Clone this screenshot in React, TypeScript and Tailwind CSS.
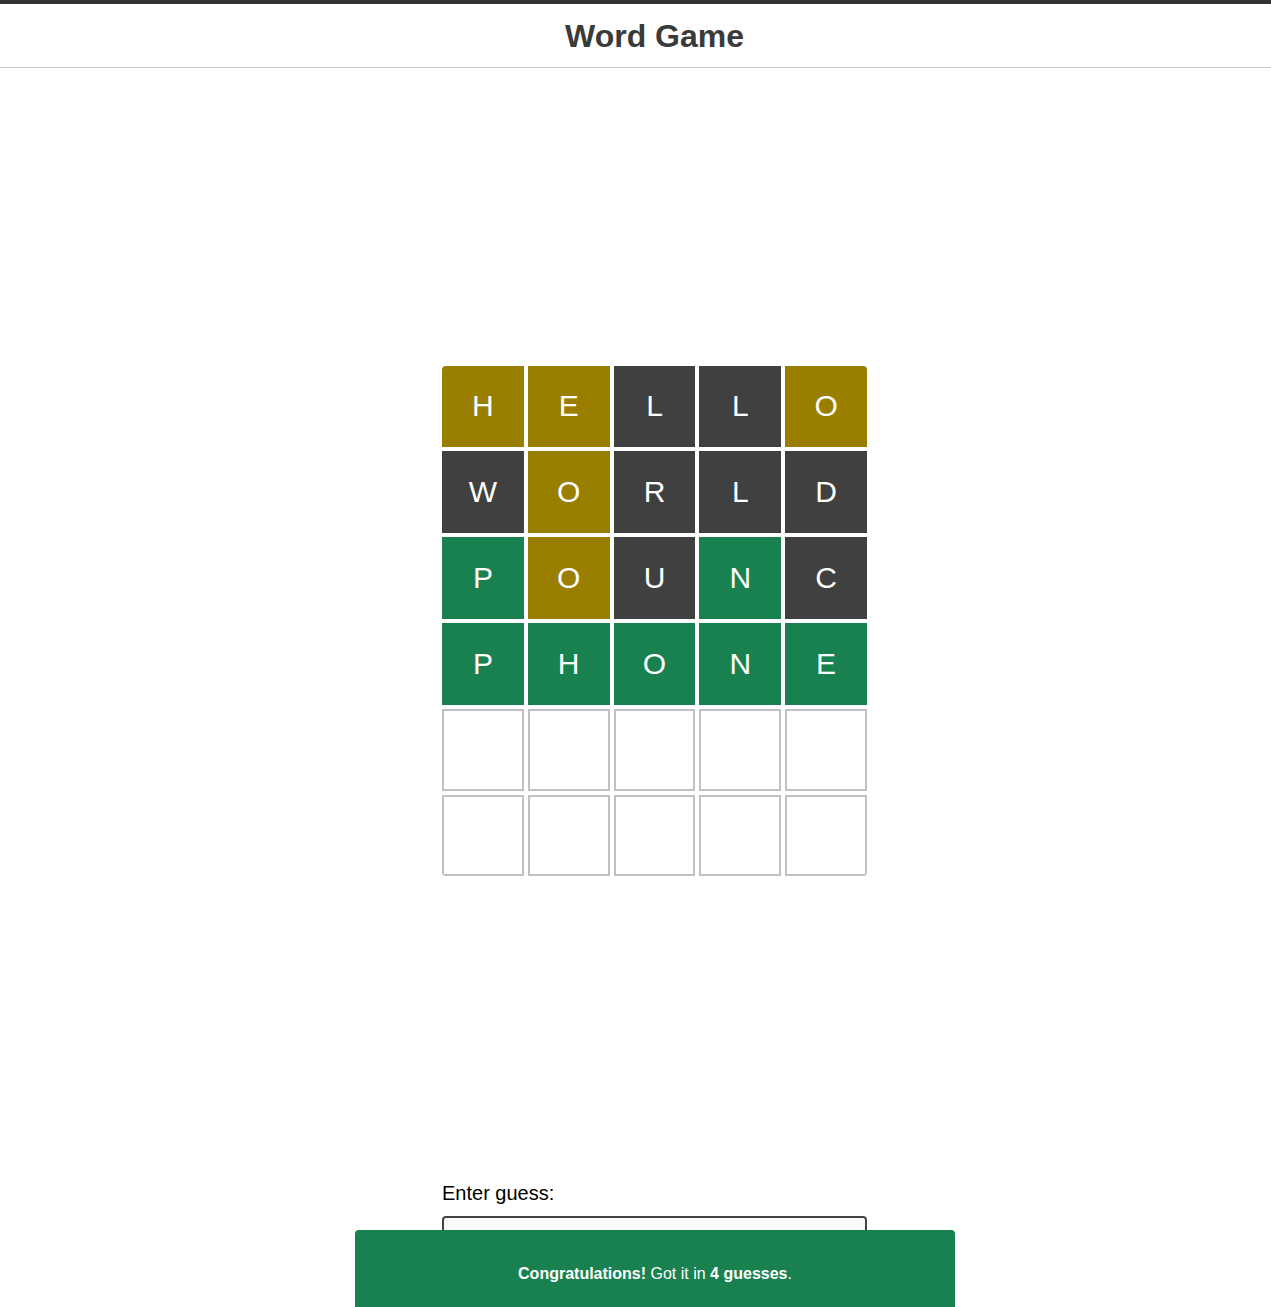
import React from "react";

type Mark = "hit" | "near" | "miss" | "empty";

const rows: { letter: string; mark: Mark }[][] = [
  [
    { letter: "H", mark: "near" },
    { letter: "E", mark: "near" },
    { letter: "L", mark: "miss" },
    { letter: "L", mark: "miss" },
    { letter: "O", mark: "near" },
  ],
  [
    { letter: "W", mark: "miss" },
    { letter: "O", mark: "near" },
    { letter: "R", mark: "miss" },
    { letter: "L", mark: "miss" },
    { letter: "D", mark: "miss" },
  ],
  [
    { letter: "P", mark: "hit" },
    { letter: "O", mark: "near" },
    { letter: "U", mark: "miss" },
    { letter: "N", mark: "hit" },
    { letter: "C", mark: "miss" },
  ],
  [
    { letter: "P", mark: "hit" },
    { letter: "H", mark: "hit" },
    { letter: "O", mark: "hit" },
    { letter: "N", mark: "hit" },
    { letter: "E", mark: "hit" },
  ],
  Array.from({ length: 5 }, () => ({ letter: "", mark: "empty" as Mark })),
  Array.from({ length: 5 }, () => ({ letter: "", mark: "empty" as Mark })),
];

const tileStyles: Record<Mark, string> = {
  hit: "bg-[#198150] text-white",
  near: "bg-[#9a7e00] text-white",
  miss: "bg-[#404040] text-white",
  empty: "border-2 border-[#c0c0c0] bg-white",
};

function Tile({ letter, mark }: { letter: string; mark: Mark }) {
  return (
    <div
      className={`flex aspect-square items-center justify-center text-[30px] leading-none ${tileStyles[mark]}`}
    >
      {letter}
    </div>
  );
}

export default function App() {
  return (
    <div className="flex h-screen w-[1309px] flex-col overflow-hidden bg-white font-['Liberation_Sans',Arial,sans-serif] text-black">
      <header className="flex h-[68px] shrink-0 items-center justify-center border-t-4 border-b border-t-[#333333] border-b-[#c8c8c8]">
        <h1 className="text-[32px] font-bold text-[#3a3a3a]">Word Game</h1>
      </header>

      <main className="flex flex-1 items-center justify-center">
        <div className="grid w-[425px] grid-cols-5 gap-1 overflow-hidden rounded-[4px]">
          {rows.map((row, r) =>
            row.map((tile, c) => (
              <Tile key={`${r}-${c}`} letter={tile.letter} mark={tile.mark} />
            ))
          )}
        </div>
      </main>

      <section className="mx-auto h-[133px] w-[425px] shrink-0 pt-[8px]">
        <label className="block text-[20px] leading-[22px]">Enter guess:</label>
        <input
          type="text"
          className="mt-[12px] h-[44px] w-full rounded-[4px] border-2 border-[#444444] bg-[#f9f9f9] px-3 text-[20px] outline-none"
        />
      </section>

      <div className="fixed bottom-0 left-[355px] h-[77px] w-[600px] rounded-t-[4px] bg-[#198150] pt-[35px] text-center text-[16px] leading-[18px] text-white">
        <strong>Congratulations!</strong> Got it in <strong>4 guesses</strong>.
      </div>
    </div>
  );
}
